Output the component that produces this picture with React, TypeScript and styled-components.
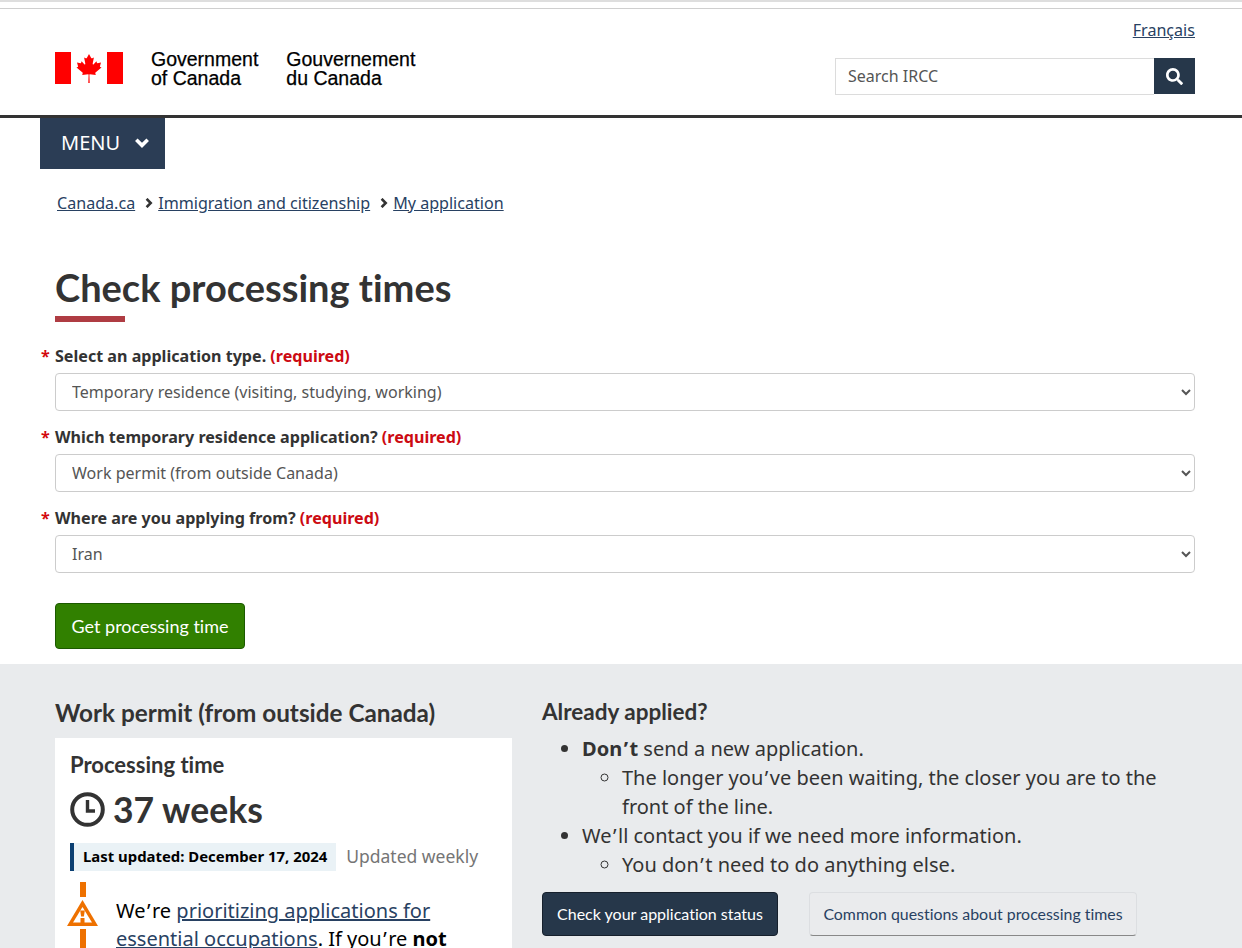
import { FunctionComponent } from "react";
import { FaSearch } from "react-icons/fa";
import styled, { createGlobalStyle } from "styled-components";

const GlobalStyle = createGlobalStyle`
  html, body {
    margin: 0;
    padding: 0;
    height: 948px;
    overflow: hidden;
    background: #fff;
  }
  body {
    font-family: "Noto Sans", sans-serif;
    font-variant-ligatures: none;
    color: #333;
  }
  button {
    font-variant-ligatures: none;
  }
`;

const Page = styled.div`
  height: 948px;
  overflow: hidden;
`;

const TopStrip = styled.div`
  height: 8px;
  box-sizing: border-box;
  border-top: 2px solid #dedede;
`;

const Header = styled.header`
  height: 107px;
  box-sizing: border-box;
  border-top: 1px solid #cfcfcf;
  padding: 0 47px 0 55px;
  display: flex;
  justify-content: space-between;
`;

const Brand = styled.div`
  display: flex;
  align-items: flex-start;
  padding-top: 43px;
`;

const Signature = styled.div<{ $gap: number }>`
  font-family: "Liberation Sans", Arial, sans-serif;
  font-size: 19.5px;
  line-height: 18.5px;
  color: #000;
  margin-left: ${(p) => p.$gap}px;
  -webkit-text-stroke: 0.25px #000;
  margin-top: -2px;
`;

const HeaderRight = styled.div`
  display: flex;
  flex-direction: column;
  align-items: flex-end;
  padding-top: 10px;
`;

const TextLink = styled.a`
  color: #284162;
  text-decoration: underline;
  font-size: 16.1px;
  line-height: 22px;
`;

const SearchBar = styled.form`
  display: flex;
  margin-top: 17px;
  height: 37px;
`;

const SearchInput = styled.div`
  width: 319px;
  box-sizing: border-box;
  border: 1px solid #dcdcdc;
  border-right: 0;
  padding-left: 12px;
  font-size: 16px;
  line-height: 35px;
  color: #555;
`;

const SearchButton = styled.button`
  width: 41px;
  height: 36px;
  border: 0;
  padding: 0;
  background: #26374a;
  color: #fff;
  display: flex;
  align-items: center;
  justify-content: center;
  font-size: 17px;
`;

const Rule = styled.div`
  height: 3px;
  background: #333;
`;

const MenuButton = styled.button`
  display: flex;
  align-items: center;
  margin-left: 40px;
  width: 125px;
  height: 51px;
  border: 0;
  padding: 0 0 2px 21px;
  background: #2b3d55;
  color: #fff;
  font-family: "Noto Sans", sans-serif;
  font-size: 20px;
  svg {
    margin: 1px 0 0 15px;
  }
`;

const Breadcrumbs = styled.nav`
  display: flex;
  align-items: center;
  padding-left: 57px;
  margin-top: 23px;
  height: 22px;
`;

const Crumb = styled.span`
  display: flex;
  align-items: center;
  margin-right: 10px;
  svg {
    margin-right: 5px;
  }
`;

const Main = styled.main`
  padding: 0 47px 0 55px;
`;

const Title = styled.h1`
  margin: 50px 0 0;
  font-family: Lato, sans-serif;
  font-size: 38px;
  font-weight: 700;
  line-height: 46px;
  color: #333;
  &::after {
    content: "";
    display: block;
    width: 70px;
    height: 6px;
    margin-top: 6px;
    background: #af3c43;
  }
`;

const Fields = styled.div`
  margin-top: 23px;
`;

const Field = styled.div`
  margin-bottom: 15px;
`;

const Label = styled.label`
  display: block;
  position: relative;
  font-size: 16.1px;
  font-weight: 700;
  line-height: 22px;
  margin-bottom: 6px;
`;

const Star = styled.span`
  position: absolute;
  left: -14px;
  color: #d3080c;
`;

const Required = styled.span`
  color: #cc0a12;
`;

const Select = styled.select`
  display: block;
  width: 100%;
  height: 38px;
  box-sizing: border-box;
  padding: 0 12px;
  border: 1px solid #ccc;
  border-radius: 4px;
  background: #fff;
  color: #555;
  font-family: "Noto Sans", sans-serif;
  font-size: 16.05px;
`;

const SubmitButton = styled.button`
  display: block;
  margin-top: 30px;
  width: 190px;
  height: 46px;
  border: 1px solid #1c5a00;
  border-radius: 4px;
  background: #318000;
  color: #fff;
  font-family: Lato, sans-serif;
  font-size: 18px;
`;

const ResultBand = styled.section`
  margin-top: 15px;
  background: #e9ebed;
  height: 284px;
  box-sizing: border-box;
  padding: 34px 47px 0 55px;
  display: flex;
`;

const LeftColumn = styled.div`
  width: 457px;
  flex: none;
`;

const RightColumn = styled.div`
  margin-left: 30px;
  flex: 1;
`;

const ResultTitle = styled.h2`
  margin: 0;
  font-family: Lato, sans-serif;
  font-size: 24.3px;
  font-weight: 700;
  line-height: 30px;
  color: #333;
`;

const Card = styled.div`
  margin-top: 10px;
  background: #fff;
  padding: 13px 15px 0;
  height: 260px;
  box-sizing: border-box;
`;

const CardTitle = styled.h3`
  margin: 0;
  font-family: Lato, sans-serif;
  font-size: 22px;
  font-weight: 700;
  line-height: 28px;
`;

const Weeks = styled.div`
  display: flex;
  align-items: center;
  margin-top: 7px;
  font-family: Lato, sans-serif;
  font-size: 35.5px;
  font-weight: 700;
  line-height: 48px;
  svg {
    margin: -2px 8px 0 0;
  }
`;

const UpdatedRow = styled.div`
  display: flex;
  align-items: center;
  margin-top: 9px;
`;

const UpdatedBadge = styled.div`
  box-sizing: border-box;
  height: 28px;
  border-left: 4px solid #0b3f72;
  background: #eaf2f6;
  padding: 0 9px;
  font-size: 14.9px;
  font-weight: 700;
  line-height: 27px;
  color: #000;
`;

const UpdatedNote = styled.span`
  margin: -2px 0 0 10px;
  font-size: 17.5px;
  color: #757575;
`;

const Notice = styled.div`
  display: flex;
  margin-top: 11px;
`;

const NoticeIcon = styled.div`
  flex: none;
  width: 31px;
  margin-left: -3px;
  margin-right: 18px;
  display: flex;
  flex-direction: column;
  align-items: center;
`;

const NoticeBar = styled.div<{ $h: number }>`
  width: 6px;
  background: #ee7100;
  height: ${(p) => p.$h}px;
  flex: none;
`;

const WarningGlyph = styled.svg`
  flex: none;
  margin: 3px 0;
`;

const NoticeText = styled.p`
  margin: 15px 0 0;
  font-size: 20px;
  line-height: 28px;
  color: #000;
`;

const NoticeLink = styled.a`
  color: #284162;
  text-decoration: underline;
`;

const AppliedTitle = styled.h2`
  margin: 0;
  font-family: Lato, sans-serif;
  font-size: 22.5px;
  font-weight: 700;
  line-height: 28px;
  color: #333;
`;

const List = styled.ul<{ $nested?: boolean }>`
  margin: ${(p) => (p.$nested ? "0" : "8px 0 0")};
  padding-left: 40px;
  list-style-type: ${(p) => (p.$nested ? "circle" : "disc")};
  font-size: 20px;
  line-height: 29px;
`;

// the apostrophe sits wider in the reference than in this copy of Noto Sans
const Apos = styled.span`
  margin: 0 1.5px;
`;

const ButtonRow = styled.div`
  display: flex;
  margin-top: 13px;
`;

const ActionButton = styled.a<{ $primary?: boolean }>`
  display: flex;
  align-items: center;
  justify-content: center;
  box-sizing: border-box;
  height: 44px;
  width: ${(p) => (p.$primary ? "236px" : "328px")};
  margin-right: 31px;
  padding-bottom: 1px;
  border: 1px solid ${(p) => (p.$primary ? "#16202c" : "#dcdee1")};
  border-bottom-color: ${(p) => (p.$primary ? "#16202c" : "#888")};
  border-radius: 4px;
  background: ${(p) => (p.$primary ? "#26374a" : "#eaebed")};
  color: ${(p) => (p.$primary ? "#fff" : "#284162")};
  font-family: Lato, sans-serif;
  font-size: ${(p) => (p.$primary ? "16px" : "15.9px")};
  text-decoration: none;
`;

const FlagLogo: FunctionComponent = () => (
  <svg width="68" height="32" viewBox="0 0 68 32">
    <rect x="0" y="0" width="16" height="32" fill="#f00" />
    <rect x="52" y="0" width="16" height="32" fill="#f00" />
    <path
      fill="#f00"
      d="M34 2l-2.2 4c-.3.5-.7.4-1.1.2l-1.6-.8 1.2 6.2c.2 1.1-.6 1.1-1 .6l-2.7-3-.5 1.6c-.1.3-.3.4-.6.4l-3.5-.7.9 3.3c.2.7.4 1-.2 1.3l-1.2.5 6 4.9c.2.2.3.5.2.8l-.5 1.7 6-.7c.2 0 .4.2.4.4l-.3 8.3h1.4l-.3-8.3c0-.2.2-.4.4-.4l6 .7-.5-1.7c-.1-.3 0-.6.2-.8l6-4.9-1.2-.5c-.6-.3-.4-.6-.2-1.3l.9-3.3-3.5.7c-.3 0-.5-.1-.6-.4l-.5-1.6-2.7 3c-.4.5-1.2.5-1-.6l1.2-6.2-1.6.8c-.4.2-.8.3-1.1-.2z"
    />
  </svg>
);

const ChevronDown: FunctionComponent = () => (
  <svg width="14" height="10" viewBox="0 0 14 10" fill="none" stroke="#fff" strokeWidth="3.6">
    <path d="M1.3 1.8L7 7.4l5.7-5.6" />
  </svg>
);

const ChevronRight: FunctionComponent = () => (
  <svg width="8" height="10" viewBox="0 0 8 10" fill="none" stroke="#333" strokeWidth="2.6">
    <path d="M1.6 .8L5.7 5 1.6 9.2" />
  </svg>
);

const ClockIcon: FunctionComponent = () => (
  <svg width="35" height="35" viewBox="0 0 35 35" fill="none" stroke="#333" strokeWidth="4">
    <circle cx="17.5" cy="17.5" r="15.3" />
    <path d="M17.5 8v11h7.5" strokeWidth="3.4" />
  </svg>
);

const WarningIcon: FunctionComponent = () => (
  <WarningGlyph width="31" height="26" viewBox="0 0 31 26">
    <path fill="#ee7100" d="M15.5 0L31 26H0z" />
    <path fill="#fff" d="M15.5 7L25 22.5H6z" />
    <path fill="#ee7100" d="M13.2 10.5h4.6l-.9 6h-2.8z" />
    <rect x="13.5" y="18" width="4" height="5" fill="#ee7100" />
  </WarningGlyph>
);

const crumbs = ["Canada.ca", "Immigration and citizenship", "My application"];

const fields = [
  { label: "Select an application type.", value: "Temporary residence (visiting, studying, working)" },
  { label: "Which temporary residence application?", value: "Work permit (from outside Canada)" },
  { label: "Where are you applying from?", value: "Iran" },
];

const App: FunctionComponent = () => {
  return (
    <Page>
      <GlobalStyle />
      <TopStrip />
      <Header>
        <Brand>
          <FlagLogo />
          <Signature $gap={28}>
            Government
            <br />
            of Canada
          </Signature>
          <Signature $gap={28}>
            Gouvernement
            <br />
            du Canada
          </Signature>
        </Brand>
        <HeaderRight>
          <TextLink href="#">Français</TextLink>
          <SearchBar>
            <SearchInput>Search IRCC</SearchInput>
            <SearchButton type="button" aria-label="Search">
              <FaSearch />
            </SearchButton>
          </SearchBar>
        </HeaderRight>
      </Header>
      <Rule />
      <MenuButton type="button">
        MENU
        <ChevronDown />
      </MenuButton>
      <Breadcrumbs>
        {crumbs.map((crumb, i) => (
          <Crumb key={crumb}>
            {i > 0 && <ChevronRight />}
            <TextLink href="#">{crumb}</TextLink>
          </Crumb>
        ))}
      </Breadcrumbs>
      <Main>
        <Title>Check processing times</Title>
        <Fields>
          {fields.map((field) => (
            <Field key={field.label}>
              <Label>
                <Star>*</Star>
                {field.label} <Required>(required)</Required>
              </Label>
              <Select defaultValue={field.value}>
                <option>{field.value}</option>
              </Select>
            </Field>
          ))}
        </Fields>
        <SubmitButton type="button">Get processing time</SubmitButton>
      </Main>
      <ResultBand>
        <LeftColumn>
          <ResultTitle>Work permit (from outside Canada)</ResultTitle>
          <Card>
            <CardTitle>Processing time</CardTitle>
            <Weeks>
              <ClockIcon />
              37 weeks
            </Weeks>
            <UpdatedRow>
              <UpdatedBadge>Last updated: December 17, 2024</UpdatedBadge>
              <UpdatedNote>Updated weekly</UpdatedNote>
            </UpdatedRow>
            <Notice>
              <NoticeIcon>
                <NoticeBar $h={15} />
                <WarningIcon />
                <NoticeBar $h={40} />
              </NoticeIcon>
              <NoticeText>
                We<Apos>’</Apos>re <NoticeLink href="#">prioritizing applications for essential occupations</NoticeLink>. If
                you<Apos>’</Apos>re <strong>not</strong>
              </NoticeText>
            </Notice>
          </Card>
        </LeftColumn>
        <RightColumn>
          <AppliedTitle>Already applied?</AppliedTitle>
          <List>
            <li>
              <strong>Don<Apos>’</Apos>t</strong> send a new application.
              <List $nested>
                <li>The longer you<Apos>’</Apos>ve been waiting, the closer you are to the front of the line.</li>
              </List>
            </li>
            <li>
              We<Apos>’</Apos>ll contact you if we need more information.
              <List $nested>
                <li>You don<Apos>’</Apos>t need to do anything else.</li>
              </List>
            </li>
          </List>
          <ButtonRow>
            <ActionButton $primary href="#">
              Check your application status
            </ActionButton>
            <ActionButton href="#">Common questions about processing times</ActionButton>
          </ButtonRow>
        </RightColumn>
      </ResultBand>
    </Page>
  );
};

export default App;
